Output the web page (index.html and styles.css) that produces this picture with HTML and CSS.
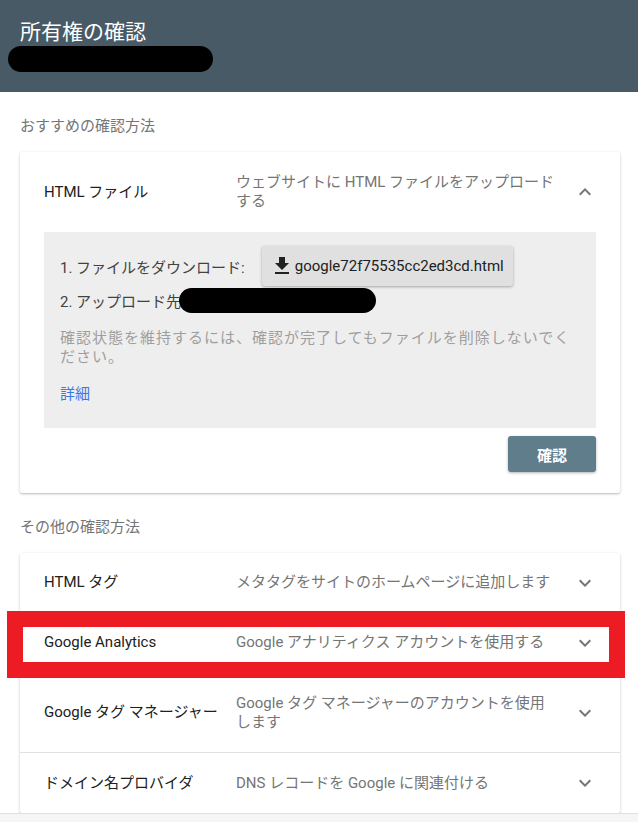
FILE: index.html
```html
<!DOCTYPE html>
<html lang="ja">
<head>
  <meta charset="UTF-8" />
  <title>所有権の確認</title>
  <link rel="stylesheet" href="styles.css">
</head>
<body>
  <!-- ヘッダー -->
  <header class="page-header">
    <h1>所有権の確認</h1>
    <div class="redact redact-site"></div>
  </header>

  <main class="content">
    <div class="section-label">おすすめの確認方法</div>

    <!-- おすすめ: HTML ファイル（展開済み） -->
    <section class="card">
      <div class="method-row">
        <div class="method-name">HTML ファイル</div>
        <div class="method-desc">ウェブサイトに HTML ファイルをアップロードする</div>
        <div class="method-toggle">
          <svg viewBox="0 0 24 24" width="24" height="24"><path d="M7.41 15.41L12 10.83l4.59 4.58L18 14l-6-6-6 6z"/></svg>
        </div>
      </div>

      <div class="method-panel">
        <div class="step step-download">
          <span>1. ファイルをダウンロード:</span>
          <button class="file-btn">
            <svg viewBox="0 0 24 24" width="24" height="24"><path d="M19 9h-4V3H9v6H5l7 7 7-7zM5 18v2h14v-2H5z"/></svg>
            google72f75535cc2ed3cd.html
          </button>
        </div>
        <div class="step step-upload">
          <span>2. アップロード先</span>
          <div class="redact redact-url"></div>
        </div>
        <p class="note">確認状態を維持するには、確認が完了してもファイルを削除しないでください。</p>
        <a class="more-link" href="#">詳細</a>
      </div>

      <div class="card-actions">
        <button class="verify-btn">確認</button>
      </div>
    </section>

    <div class="section-label">その他の確認方法</div>

    <!-- その他の方法 -->
    <section class="card card-list">
      <div class="method-row row-short">
        <div class="method-name">HTML タグ</div>
        <div class="method-desc">メタタグをサイトのホームページに追加します</div>
        <div class="method-toggle">
          <svg viewBox="0 0 24 24" width="24" height="24"><path d="M16.59 8.59L12 13.17 7.41 8.59 6 10l6 6 6-6z"/></svg>
        </div>
      </div>
      <div class="method-row row-short marked">
        <div class="method-name">Google Analytics</div>
        <div class="method-desc">Google アナリティクス アカウントを使用する</div>
        <div class="method-toggle">
          <svg viewBox="0 0 24 24" width="24" height="24"><path d="M16.59 8.59L12 13.17 7.41 8.59 6 10l6 6 6-6z"/></svg>
        </div>
        <span class="highlight-box"></span>
      </div>
      <div class="method-row">
        <div class="method-name">Google タグ マネージャー</div>
        <div class="method-desc">Google タグ マネージャーのアカウントを使用します</div>
        <div class="method-toggle">
          <svg viewBox="0 0 24 24" width="24" height="24"><path d="M16.59 8.59L12 13.17 7.41 8.59 6 10l6 6 6-6z"/></svg>
        </div>
      </div>
      <div class="method-row row-short">
        <div class="method-name">ドメイン名プロバイダ</div>
        <div class="method-desc">DNS レコードを Google に関連付ける</div>
        <div class="method-toggle">
          <svg viewBox="0 0 24 24" width="24" height="24"><path d="M16.59 8.59L12 13.17 7.41 8.59 6 10l6 6 6-6z"/></svg>
        </div>
      </div>
    </section>
  </main>

  <div class="bottom-bar"></div>
</body>
</html>
```

FILE: styles.css
```css
/* ベース */
html, body {
  margin: 0;
  padding: 0;
  background: #fff;
  overflow: hidden;
  font-family: Roboto, "Noto Sans CJK JP", sans-serif;
  color: #212121;
  box-sizing: border-box;
}
*, *::before, *::after {
  box-sizing: inherit;
}

/* ヘッダー */
.page-header {
  background: #485a65;
  height: 92px;
  padding: 18px 0 0 8px;
}
.page-header h1 {
  margin: 0 0 0 12px;
  font-size: 21px;
  line-height: 28px;
  font-weight: 400;
  color: #fff;
}
.redact {
  background: #000;
  border-radius: 13px;
}
.redact-site {
  width: 205px;
  height: 26px;
}

/* コンテンツ */
.content {
  padding: 0 18px 0 20px;
}
.section-label {
  padding: 24px 0 16px;
  font-size: 15px;
  line-height: 20px;
  color: #757575;
}

.card {
  background: #fff;
  border-radius: 2px;
  box-shadow: 0 1px 3px rgba(0,0,0,0.22), 0 1px 1px rgba(0,0,0,0.08);
}

/* 行 */
.method-row {
  position: relative;
  display: flex;
  align-items: center;
  min-height: 80px;
  padding: 0 17px 0 24px;
  border-bottom: 1px solid #e0e0e0;
}
.card:not(.card-list) .method-row {
  border-bottom: none;
}
.method-row.row-short {
  min-height: 60px;
}
.card-list .method-row:last-child {
  border-bottom: none;
}
.method-name {
  width: 192px;
  flex-shrink: 0;
  font-size: 15px;
  line-height: 19px;
}
.method-desc {
  flex: 1;
  padding-right: 9px;
  font-size: 15px;
  line-height: 19px;
  color: #757575;
}
.method-toggle {
  width: 36px;
  display: flex;
  justify-content: center;
}
.method-toggle svg {
  fill: #757575;
}

/* 展開パネル */
.method-panel {
  margin: 0 24px;
  background: #eeeeee;
  padding: 14px 16px 24px;
  font-size: 15px;
  color: #424242;
}
.step {
  display: flex;
  align-items: center;
}
.step-download span {
  margin-right: 17px;
}
.file-btn {
  display: flex;
  align-items: center;
  gap: 1px;
  height: 40px;
  padding: 0 9px 0 8px;
  border: none;
  border-radius: 3px;
  background: #e0e0e0;
  box-shadow: 0 1px 3px rgba(0,0,0,0.3);
  font-family: inherit;
  font-size: 15px;
  color: #212121;
}
.file-btn svg {
  fill: #212121;
}
.step-upload {
  height: 26px;
  margin-top: 1px;
}
.redact-url {
  width: 197px;
  height: 25px;
  margin-left: -2px;
  border-radius: 13px;
}
.note {
  margin: 16px 0 0;
  font-size: 15px;
  line-height: 19px;
  letter-spacing: 1px;
  color: #9e9e9e;
}
.more-link {
  display: inline-block;
  margin-top: 17px;
  font-size: 15px;
  line-height: 20px;
  color: #3b78e7;
  text-decoration: none;
}

.card-actions {
  display: flex;
  justify-content: flex-end;
  padding: 8px 24px 21px;
}
.verify-btn {
  width: 88px;
  height: 36px;
  border: none;
  border-radius: 3px;
  background: #607d8b;
  color: #fff;
  font-family: inherit;
  font-size: 15px;
  font-weight: 700;
  box-shadow: 0 1px 3px rgba(0,0,0,0.3);
}

/* 赤枠の注記 */
.highlight-box {
  position: absolute;
  left: -13px;
  right: -5px;
  top: -2px;
  bottom: -6px;
  border: 16px solid #ed1c24;
  pointer-events: none;
}

/* 下部のバー */
.bottom-bar {
  position: fixed;
  left: 0;
  right: 0;
  bottom: 0;
  height: 9px;
  background: #f5f5f5;
  border-top: 1px solid #e0e0e0;
}
```
